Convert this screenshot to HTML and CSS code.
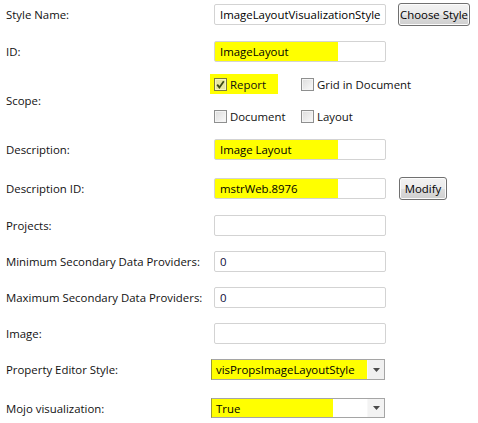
FILE: index.html
```html
<!DOCTYPE html>
<html>
<head>
<meta charset="utf-8">
<link rel="stylesheet" href="styles.css">
</head>
<body>
<div class="form">
  <div class="row r-style">
    <div class="label">Style Name:</div>
    <div class="field">
      <div class="text-box"><span class="val">ImageLayoutVisualizationStyle</span></div>
      <div class="btn btn-choose">Choose Style</div>
    </div>
  </div>
  <div class="row r-id">
    <div class="label">ID:</div>
    <div class="field">
      <div class="text-box hl"><span class="val">ImageLayout</span></div>
    </div>
  </div>
  <div class="row r-scope">
    <div class="label">Scope:</div>
    <div class="scope">
      <div class="scope-line">
        <div class="chk-item chk-report"><span class="box checked"><svg viewBox="0 0 9 9" width="9" height="9"><path d="M1.2 4.6 L3.4 7.4 L7.8 1.2" fill="none" stroke="#3b4a14" stroke-width="1.8"/></svg></span>Report</div>
        <div class="chk-item chk-grid"><span class="box"></span>Grid in Document</div>
      </div>
      <div class="scope-line line2">
        <div class="chk-item chk-doc"><span class="box"></span>Document</div>
        <div class="chk-item chk-layout"><span class="box"></span>Layout</div>
      </div>
    </div>
  </div>
  <div class="row r-desc">
    <div class="label">Description:</div>
    <div class="field">
      <div class="text-box hl"><span class="val">Image Layout</span></div>
    </div>
  </div>
  <div class="row r-descid">
    <div class="label">Description ID:</div>
    <div class="field">
      <div class="text-box hl"><span class="val">mstrWeb.8976</span></div>
      <div class="btn btn-modify">Modify</div>
    </div>
  </div>
  <div class="row r-proj">
    <div class="label">Projects:</div>
    <div class="field">
      <div class="text-box"><span class="val"></span></div>
    </div>
  </div>
  <div class="row r-min">
    <div class="label">Minimum Secondary Data Providers:</div>
    <div class="field">
      <div class="text-box"><span class="val num">0</span></div>
    </div>
  </div>
  <div class="row r-max">
    <div class="label">Maximum Secondary Data Providers:</div>
    <div class="field">
      <div class="text-box"><span class="val num">0</span></div>
    </div>
  </div>
  <div class="row r-img">
    <div class="label">Image:</div>
    <div class="field">
      <div class="text-box"><span class="val"></span></div>
    </div>
  </div>
  <div class="row r-prop">
    <div class="label">Property Editor Style:</div>
    <div class="field sel-field">
      <div class="select sel-prop"><span class="sel-val">visPropsImageLayoutStyle</span><span class="arrow"><svg width="7" height="4" viewBox="0 0 7 4"><path d="M0 0 H7 L3.5 4 Z" fill="#4a4a4a"/></svg></span></div>
    </div>
  </div>
  <div class="row r-mojo">
    <div class="label">Mojo visualization:</div>
    <div class="field sel-field">
      <div class="select sel-mojo"><span class="sel-val">True</span><span class="fill"></span><span class="arrow"><svg width="7" height="4" viewBox="0 0 7 4"><path d="M0 0 H7 L3.5 4 Z" fill="#4a4a4a"/></svg></span></div>
    </div>
  </div>
</div>
</body>
</html>
```

FILE: styles.css
```css
html, body {
  margin: 0;
  padding: 0;
  background: #fff;
}
body {
  font-family: "Open Sans", "Noto Sans", sans-serif;
  font-size: 11.4px;
  color: #111;
}
.form {
  padding-top: 3px;
  display: flex;
  flex-direction: column;
}
.row {
  display: grid;
  grid-template-columns: 214px 1fr;
  align-items: center;
  height: 21px;
}
.label {
  padding-left: 6px;
  white-space: nowrap;
}
.field {
  display: flex;
  align-items: center;
}
.r-id { margin-top: 17px; }
.r-scope { margin-top: 12px; height: 52px; }
.r-desc { margin-top: 13px; }
.r-descid { margin-top: 17px; }
.r-proj { margin-top: 17px; }
.r-min { margin-top: 15px; }
.r-max { margin-top: 15px; }
.r-img { margin-top: 15px; }
.r-prop { margin-top: 15px; }
.r-mojo { margin-top: 18px; height: 20px; }

.text-box {
  box-sizing: border-box;
  width: 172px;
  height: 21px;
  border: 1px solid #d3d3d3;
  border-radius: 2px;
  background: #fff;
  display: flex;
  align-items: center;
  color: #000;
}
.text-box.hl {
  background: linear-gradient(to right, #ffff00 123px, #fff 123px);
}
.val {
  padding-left: 5px;
  white-space: nowrap;
}
.val.num { color: #0c0c3a; }

.btn {
  box-sizing: border-box;
  height: 23px;
  border: 1px solid #707070;
  border-radius: 3px;
  background: linear-gradient(#f2f2f2, #ebebeb 50%, #dddddd 51%, #cfcfcf);
  display: flex;
  align-items: center;
  justify-content: center;
  color: #000;
  white-space: nowrap;
  box-shadow: inset 0 0 0 1px #fcfcfc;
}
.btn-choose { margin-left: 12px; width: 72px; }
.btn-modify { margin-left: 13px; width: 48px; }

.scope {
  display: flex;
  flex-direction: column;
  align-self: stretch;
  margin-left: -4px;
}
.scope-line {
  display: flex;
  align-items: center;
  height: 20px;
}
.scope-line.line2 { margin-top: 12px; }
.chk-item {
  display: flex;
  align-items: center;
  height: 20px;
  white-space: nowrap;
}
.chk-report {
  background: #ffff00;
  width: 68px;
  padding-left: 4px;
  box-sizing: border-box;
}
.chk-grid { margin-left: 23px; }
.chk-doc { padding-left: 4px; width: 91px; box-sizing: border-box; }
.box {
  box-sizing: border-box;
  width: 13px;
  height: 13px;
  border: 1px solid #8e8f8f;
  background: linear-gradient(135deg, #dcdcdc, #fafafa);
  box-shadow: inset 0 0 0 1px #f4f4f4;
  margin-right: 3px;
  display: flex;
  align-items: center;
  justify-content: center;
}
.box.checked {
  background: #e8e8a0;
  border-color: #7a7a40;
  box-shadow: inset 0 0 0 1px #f6f6c0;
}

.sel-field { margin-left: -3px; }
.select {
  box-sizing: border-box;
  width: 174px;
  height: 21px;
  border: 1px solid #a5a5a5;
  border-left-color: #9a9a30;
  display: flex;
  align-items: stretch;
  background: #fff;
}
.sel-mojo { height: 20px; }
.sel-val {
  display: flex;
  align-items: center;
  padding-left: 4px;
  background: #ffff00;
  color: #000;
  white-space: nowrap;
}
.sel-prop .sel-val { flex: 1; }
.sel-mojo .sel-val { width: 121px; box-sizing: border-box; }
.fill { flex: 1; }
.arrow {
  width: 16px;
  background: #f0f0f0;
  border-left: 1px solid #f8f8f8;
  display: flex;
  align-items: center;
  justify-content: center;
}
.sel-mojo .arrow { background: #f3f3f3; }
```
